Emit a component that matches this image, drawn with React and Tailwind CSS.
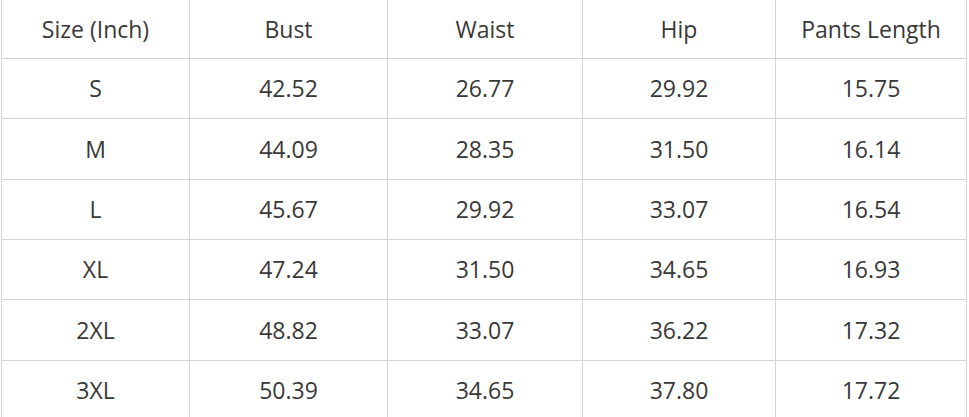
const columns = [
  { label: "Size (Inch)", width: "w-[188px]" },
  { label: "Bust", width: "w-[198px]" },
  { label: "Waist", width: "w-[195px]" },
  { label: "Hip", width: "w-[193px]" },
  { label: "Pants Length", width: "w-[191px]" },
];

const rows = [
  { cells: ["S", "42.52", "26.77", "29.92", "15.75"], height: "h-[60px]" },
  { cells: ["M", "44.09", "28.35", "31.50", "16.14"], height: "h-[61px]" },
  { cells: ["L", "45.67", "29.92", "33.07", "16.54"], height: "h-[60px]" },
  { cells: ["XL", "47.24", "31.50", "34.65", "16.93"], height: "h-[60px]" },
  { cells: ["2XL", "48.82", "33.07", "36.22", "17.32"], height: "h-[61px]" },
  { cells: ["3XL", "50.39", "34.65", "37.80", "17.72"], height: "h-[60px]" },
];

const Row = ({ cells, height }) => (
  <div className={`flex ${height} border-b border-[#d3d3d3]`}>
    {cells.map((cell, i) => (
      <div
        key={i}
        className={`${columns[i].width} shrink-0 flex items-center justify-center border-r border-[#d3d3d3]`}
      >
        {cell}
      </div>
    ))}
  </div>
);

export default function App() {
  return (
    <div className="w-[969px] h-[417px] overflow-hidden bg-white">
      <div
        className="ml-px w-[966px] border-l border-[#d3d3d3] text-[23px] text-[#383838]"
        style={{ fontFamily: '"Open Sans", sans-serif' }}
      >
        <Row cells={columns.map((c) => c.label)} height="h-[59px]" />
        {rows.map((row, index) => (
          <Row key={index} cells={row.cells} height={row.height} />
        ))}
      </div>
    </div>
  );
}
